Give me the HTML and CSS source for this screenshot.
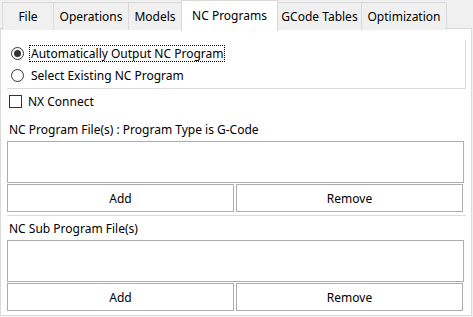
FILE: index.html
```html
<!DOCTYPE html>
<html>
<head>
<meta charset="utf-8">
<link rel="stylesheet" href="styles.css">
</head>
<body>
<div class="tabs">
  <div class="tab t-file">File</div>
  <div class="tab t-ops">Operations</div>
  <div class="tab t-models">Models</div>
  <div class="tab tab-active t-nc">NC Programs</div>
  <div class="tab t-gcode">GCode Tables</div>
  <div class="tab t-opt">Optimization</div>
</div>
<div class="panel">
  <div class="options">
    <div class="radio-row">
      <span class="radio checked"></span>
      <span class="radio-label focus">Automatically Output NC Program</span>
    </div>
    <div class="radio-row">
      <span class="radio"></span>
      <span class="radio-label">Select Existing NC Program</span>
    </div>
  </div>
  <div class="check-row">
    <span class="checkbox"></span>
    <span class="check-label">NX Connect</span>
  </div>
  <div class="section section-first">
    <div class="label">NC Program File(s) : Program Type is G-Code</div>
    <div class="listbox"></div>
    <div class="btns">
      <div class="btn">Add</div>
      <div class="btn">Remove</div>
    </div>
  </div>
  <div class="sep"></div>
  <div class="section">
    <div class="label">NC Sub Program File(s)</div>
    <div class="listbox"></div>
    <div class="btns">
      <div class="btn">Add</div>
      <div class="btn">Remove</div>
    </div>
  </div>
</div>
</body>
</html>
```
FILE: styles.css
```css
* { box-sizing: border-box; }
html, body { margin: 0; padding: 0; }
body {
  background: #f0f0f0;
  font-family: "Noto Sans", "Open Sans", sans-serif;
  font-size: 12px;
  color: #000;
  width: 473px;
  height: 317px;
  overflow: hidden;
}
.tabs {
  display: flex;
  padding: 2px 0 0 2px;
  height: 30px;
  position: relative;
  z-index: 2;
}
.tab {
  height: 28px;
  border: 1px solid #d9d9d9;
  border-bottom: none;
  background: #f0f0f0;
  display: flex;
  align-items: center;
  justify-content: center;
  margin-right: -1px;
  white-space: nowrap;
}
.t-file { width: 52px; }
.t-ops { width: 76px; }
.t-models { width: 54px; }
.t-nc { width: 97px; }
.t-gcode { width: 85px; }
.t-opt { width: 86px; }
.tab-active {
  background: #fff;
  height: 31px;
  margin-top: -2px;
  padding-bottom: 1px;
}
.panel {
  background: #fff;
  border: 1px solid #d9d9d9;
  margin-top: -2px;
  width: 472px;
  height: 288px;
  padding: 11px 5px 0 6px;
}
.options {
  border-right: 1px solid #dcdcdc;
  border-bottom: 1px solid #dcdcdc;
  padding: 2px 0 2px 0;
}
.radio-row {
  display: flex;
  align-items: center;
  height: 22px;
}
.radio {
  width: 13px;
  height: 13px;
  border: 1px solid #333;
  border-radius: 50%;
  margin-left: 4px;
  margin-right: 5px;
  display: flex;
  align-items: center;
  justify-content: center;
  flex: none;
}
.radio.checked::after {
  content: "";
  width: 7px;
  height: 7px;
  border-radius: 50%;
  background: #333;
}
.radio-label {
  padding: 0 1px;
  line-height: 15px;
  border: 1px dotted transparent;
}
.radio-label.focus { border-color: #000; }
.check-row {
  display: flex;
  align-items: center;
  height: 24px;
}
.checkbox {
  width: 13px;
  height: 13px;
  border: 1px solid #333;
  margin-left: 2px;
  margin-right: 6px;
}
.section { display: flex; flex-direction: column; }
.section-first { margin-top: 4px; }
.label {
  height: 16px;
  line-height: 16px;
  margin: 5px 0 3px 2px;
}
.listbox {
  height: 42px;
  border: 1px solid #adadad;
  background: #fff;
  margin-right: 2px;
}
.btns {
  display: flex;
  gap: 2px;
  margin-top: 1px;
  margin-right: 3px;
}
.btn {
  flex: 1;
  height: 28px;
  border: 1px solid #adadad;
  background: #fff;
  display: flex;
  align-items: center;
  justify-content: center;
}
.sep {
  height: 1px;
  background: #dcdcdc;
  margin-top: 3px;
}
```
